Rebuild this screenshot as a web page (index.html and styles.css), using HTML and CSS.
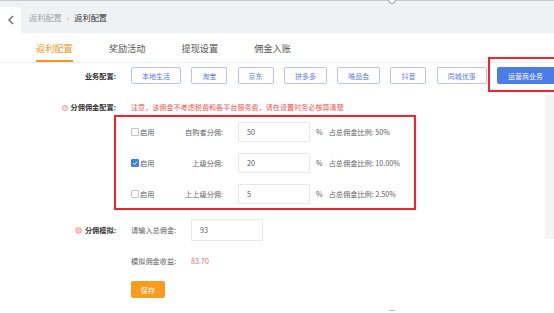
FILE: index.html
```html
<!DOCTYPE html>
<html lang="zh-CN">
<head>
  <meta charset="UTF-8">
  <meta name="viewport" content="width=device-width, initial-scale=1.0">
  <title>返利配置</title>
  <link rel="stylesheet" href="styles.css">
</head>
<body>
  <div class="page">
    <div class="handle"></div>
    <header class="topbar">
      <div class="back">
        <svg width="8" height="10" viewBox="0 0 8 10"><polyline points="6,1 2,5 6,9" fill="none" stroke="#777" stroke-width="1.6"/></svg>
      </div>
      <div class="crumbs">
        <span class="crumb">返利配置</span>
        <span class="sep">›</span>
        <span class="crumb current">返利配置</span>
      </div>
    </header>

    <nav class="tabs">
      <span class="tab active">返利配置</span>
      <span class="tab">奖励活动</span>
      <span class="tab">提现设置</span>
      <span class="tab">佣金入账</span>
    </nav>

    <main class="content">
      <div class="form-row biz-row">
        <div class="form-label">业务配置:</div>
        <div class="form-body biz-list">
          <span class="biz-btn">本地生活</span>
          <span class="biz-btn">淘宝</span>
          <span class="biz-btn">京东</span>
          <span class="biz-btn">拼多多</span>
          <span class="biz-btn">唯品会</span>
          <span class="biz-btn">抖音</span>
          <span class="biz-btn">同城优惠</span>
          <span class="biz-btn active">运营商业务</span>
        </div>
      </div>

      <div class="form-row tip-row">
        <div class="form-label">
          <svg class="tip-icon" width="6" height="6" viewBox="0 0 6 6"><circle cx="3" cy="3" r="2.4" fill="none" stroke="#f56c6c" stroke-width="0.8"/><line x1="3" y1="1.7" x2="3" y2="3.4" stroke="#f56c6c" stroke-width="0.8"/></svg>分佣佣金配置:
        </div>
        <div class="form-body warn">注意，该佣金不考虑税费和各平台服务费，请在设置时务必核算清楚</div>
      </div>

      <div class="share-box">
        <div class="share-row">
          <span class="enable"><i class="check"></i>启用</span>
          <span class="share-label">自购者分佣:</span>
          <input class="field" value="50">
          <span class="unit">%</span>
          <span class="ratio">占总佣金比例: 50%</span>
        </div>
        <div class="share-row">
          <span class="enable"><i class="check checked"><svg width="6" height="6" viewBox="0 0 6 6"><polyline points="1,3 2.5,4.5 5,1.5" fill="none" stroke="#fff" stroke-width="1"/></svg></i>启用</span>
          <span class="share-label">上级分佣:</span>
          <input class="field" value="20">
          <span class="unit">%</span>
          <span class="ratio">占总佣金比例: 10.00%</span>
        </div>
        <div class="share-row">
          <span class="enable"><i class="check"></i>启用</span>
          <span class="share-label">上上级分佣:</span>
          <input class="field" value="5">
          <span class="unit">%</span>
          <span class="ratio">占总佣金比例: 2.50%</span>
        </div>
      </div>

      <div class="form-row sim-row">
        <div class="form-label">
          <svg class="tip-icon" width="7" height="7" viewBox="0 0 7 7"><circle cx="3.5" cy="3.5" r="3.2" fill="#f9a3a3"/><circle cx="3.5" cy="3.5" r="1.6" fill="none" stroke="#fff" stroke-width="0.7"/></svg>分佣模拟:
        </div>
        <div class="form-body">
          <span class="sim-label">请输入总佣金:</span>
          <input class="field sim-field" value="93">
        </div>
      </div>

      <div class="form-row result-row">
        <div class="form-label"></div>
        <div class="form-body">
          <span class="sim-label">模拟佣金收益:</span>
          <span class="result">83.70</span>
        </div>
      </div>

      <div class="form-row save-row">
        <div class="form-label"></div>
        <div class="form-body">
          <button class="save">保存</button>
        </div>
      </div>
    </main>

    <div class="side-strip"></div>
    <div class="handle-bottom"></div>
  </div>
</body>
</html>
```

FILE: styles.css
```css
* {
  box-sizing: border-box;
}

body {
  margin: 0;
  font-family: "Noto Sans CJK SC", "Noto Sans", sans-serif;
  font-size: 7.2px;
  color: #606266;
  background: #fff;
}

.page {
  position: relative;
  width: 554px;
  height: 313px;
  overflow: hidden;
}

/* 顶部面包屑 */
.topbar {
  height: 33px;
  background: #f0f1f3;
  border-top: 1px solid #c9c9c9;
  display: flex;
}

.back {
  margin-top: 6px;
  width: 21px;
  height: 26px;
  background: #fff;
  border-radius: 0 4px 0 0;
  display: flex;
  align-items: center;
  justify-content: center;
}

.crumbs {
  margin-left: 8px;
  display: flex;
  align-items: center;
  gap: 5px;
  font-size: 8.2px;
}

.crumb {
  color: #a0a3a8;
}

.crumb.current {
  color: #333;
}

.sep {
  color: #b0b3b8;
}

/* 标签页 */
.tabs {
  height: 30px;
  padding-left: 36px;
  display: flex;
  gap: 36px;
  border-bottom: 1px solid #eeeff1;
  font-size: 9.2px;
  color: #555;
}

.tab {
  position: relative;
  display: flex;
  align-items: center;
}

.tab.active {
  color: #f7941d;
}

.tab.active::after {
  content: "";
  position: absolute;
  left: 0;
  right: 0;
  bottom: 0;
  height: 2px;
  background: #f7941d;
}

/* 表单 */
.content {
  padding-top: 4px;
}

.form-row {
  display: flex;
  align-items: center;
}

.form-label {
  width: 116px;
  flex-shrink: 0;
  text-align: right;
  font-weight: bold;
  color: #333;
  white-space: nowrap;
}

.tip-icon {
  margin-right: 3px;
  vertical-align: -1px;
}

.form-body {
  margin-left: 15px;
  display: flex;
  align-items: center;
  white-space: nowrap;
}

.biz-row {
  height: 17px;
}

.biz-list {
  gap: 10.3px;
}

.biz-btn {
  flex-shrink: 0;
  height: 17px;
  padding: 0 10px;
  border: 1px solid #b7c4f3;
  border-radius: 2px;
  font-size: 7px;
  color: #5b7be2;
  display: flex;
  align-items: center;
}

.biz-btn.active {
  position: relative;
  min-width: 60px;
  background: #4c7ce6;
  border-color: #4c7ce6;
  color: #fff;
}

.biz-btn.active::after {
  content: "";
  position: absolute;
  top: -11px;
  left: -10px;
  width: 74px;
  height: 31px;
  border: 2px solid #f5222d;
}

.tip-row {
  margin-top: 15px;
  height: 16px;
}

.warn {
  color: #f5514a;
  font-size: 7.1px;
}

/* 分佣框 */
.share-box {
  margin-left: 114px;
  width: 302px;
  border: 2px solid #f5222d;
  padding: 5px 0 4px 15px;
  display: flex;
  flex-direction: column;
  gap: 11px;
}

.share-row {
  height: 20px;
  display: flex;
  align-items: center;
  white-space: nowrap;
}

.enable {
  width: 40px;
  display: flex;
  align-items: center;
  gap: 1px;
  color: #606266;
}

.check {
  width: 8px;
  height: 8px;
  border: 1px solid #c0c4cc;
  border-radius: 1px;
  background: #fff;
  display: flex;
  align-items: center;
  justify-content: center;
}

.check.checked {
  background: #3a7ef0;
  border-color: #3a7ef0;
}

.share-label {
  width: 52px;
  text-align: right;
  color: #606266;
}

.field {
  margin-left: 15px;
  width: 72px;
  height: 20px;
  padding: 0 8px;
  border: 1px solid #e6e8eb;
  border-radius: 1px;
  font-family: inherit;
  font-size: 7.2px;
  color: #555;
  outline: none;
}

.unit {
  margin-left: 6px;
}

.ratio {
  margin-left: 6px;
}

.sim-row {
  margin-top: 9px;
  height: 22px;
}

.sim-label {
  width: 60px;
}

.sim-field {
  margin-left: 0;
  height: 22px;
}

.result-row {
  margin-top: 12px;
  height: 16px;
}

.result {
  color: #f56c6c;
}

.save-row {
  margin-top: 12px;
}

.save {
  width: 34px;
  height: 17px;
  padding: 0;
  border: none;
  border-radius: 2px;
  background: #f89b1e;
  color: #fff;
  font-family: inherit;
  font-size: 7.2px;
}

/* 其它装饰 */
.side-strip {
  position: absolute;
  right: 0;
  top: 95px;
  width: 9px;
  height: 144px;
  background: #f4f4f5;
}

.handle {
  position: absolute;
  left: 388px;
  top: -4px;
  width: 8px;
  height: 8px;
  border: 1px solid #999;
  border-radius: 50%;
  background: #fff;
}

.handle-bottom {
  position: absolute;
  left: 389px;
  top: 310px;
  width: 6px;
  height: 1px;
  background: #bbb;
}
```
